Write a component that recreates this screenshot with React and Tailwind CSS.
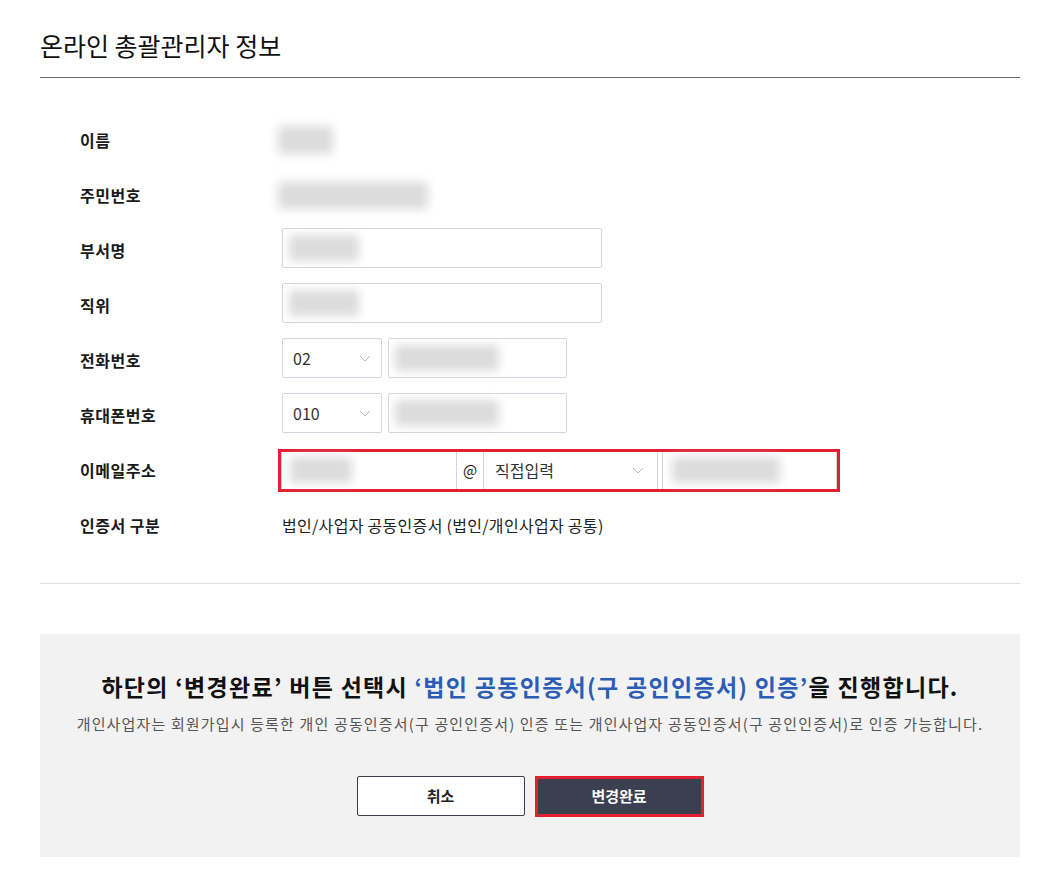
import { useState } from "react";

const font = { fontFamily: '"Noto Sans CJK KR", "Noto Sans", sans-serif' };

// masked personal data placeholder
function Masked({ className }) {
  return <div className={`rounded-[2px] bg-[#dcdcdc] blur-[5px] ${className}`} />;
}

function Chevron() {
  return (
    <svg width="12" height="7" viewBox="0 0 12 7" fill="none" className="shrink-0">
      <polyline points="1,1 6,6 11,1" stroke="#b9b7c4" strokeWidth="1" />
    </svg>
  );
}

function Row({ label, children }) {
  return (
    <div className="flex h-[40px] items-center">
      <div className="w-[198px] shrink-0 text-[16px] font-bold tracking-[0.5px] text-[#1a1a1a]">{label}</div>
      {children}
    </div>
  );
}

function TextBox({ width, blob = "w-[70px]" }) {
  return (
    <div className={`ml-[4px] -mt-[4px] flex h-[40px] items-center rounded-[2px] border border-[#d6d4e0] bg-white px-[6px] ${width}`}>
      <Masked className={`h-[26px] ${blob}`} />
    </div>
  );
}

function SelectBox({ value }) {
  return (
    <div className="ml-[4px] -mt-[4px] flex h-[40px] w-[100px] items-center justify-between rounded-[2px] border border-[#d6d4e0] bg-white pl-[10px] pr-[10px] text-[16px] text-[#333]">
      <span>{value}</span>
      <Chevron />
    </div>
  );
}

export default function App() {
  const [saved, setSaved] = useState(false);

  return (
    <div className="min-h-screen bg-white" style={font}>
      <div className="ml-[40px] w-[980px]">
        <div className="border-b border-[#666] pb-[14px] pt-[28px]">
          <h1 className="text-[25px] leading-[35px] text-[#111]">온라인 총괄관리자 정보</h1>
        </div>

        <div className="flex flex-col gap-[15px] border-b border-[#dedede] pb-[38px] pl-[40px] pt-[42px]">
          <Row label="이름">
            <Masked className="h-[28px] w-[55px]" />
          </Row>
          <Row label="주민번호">
            <Masked className="h-[27px] w-[150px]" />
          </Row>
          <Row label="부서명">
            <TextBox width="w-[320px]" />
          </Row>
          <Row label="직위">
            <TextBox width="w-[320px]" />
          </Row>
          <Row label="전화번호">
            <SelectBox value="02" />
            <div className="ml-[2px] flex">
              <TextBox width="w-[179px]" blob="w-[104px]" />
            </div>
          </Row>
          <Row label="휴대폰번호">
            <SelectBox value="010" />
            <div className="ml-[2px] flex">
              <TextBox width="w-[179px]" blob="w-[104px]" />
            </div>
          </Row>
          <Row label="이메일주소">
            <div className="flex h-[43px] w-[562px] shrink-0 border-[3px] border-[#e31f31] bg-white">
              <div className="flex h-full w-[176px] items-center border-x border-[#d6d4e0] pl-[8px]">
                <Masked className="h-[26px] w-[62px]" />
              </div>
              <div className="flex h-full w-[27px] items-center justify-center border-r border-[#d6d4e0] text-[15px] text-[#222]">
                @
              </div>
              <div className="flex h-full w-[174px] items-center justify-between border-r border-[#d6d4e0] pl-[11px] pr-[13px] text-[16px] text-[#333]">
                <span>직접입력</span>
                <Chevron />
              </div>
              <div className="ml-[4px] flex h-full w-[175px] items-center border-x border-[#d6d4e0] pl-[9px]">
                <Masked className="h-[26px] w-[108px]" />
              </div>
            </div>
          </Row>
          <Row label="인증서 구분">
            <span className="ml-[4px] text-[16px] tracking-[0.3px] text-[#222]">
              법인/사업자 공동인증서 (법인/개인사업자 공통)
            </span>
          </Row>
        </div>

        <div className="mt-[50px] flex flex-col items-center bg-[#f2f2f2] pb-[40px] pt-[36px]">
          <p className="whitespace-nowrap text-[23px] font-bold leading-[32px] tracking-[1.3px] text-[#111]">
            하단의 ‘변경완료’ 버튼 선택시{" "}
            <span className="text-[#2c5db6]">‘법인 공동인증서(구 공인인증서) 인증’</span>을 진행합니다.
          </p>
          <p className="mt-[12px] whitespace-nowrap text-[15px] leading-[20px] tracking-[1.15px] text-[#555]">
            개인사업자는 회원가입시 등록한 개인 공동인증서(구 공인인증서) 인증 또는 개인사업자 공동인증서(구 공인인증서)로 인증 가능합니다.
          </p>
          <div className="mt-[42px] flex gap-[10px]">
            <button className="h-[40px] w-[168px] rounded-[2px] border border-[#3b4050] bg-white text-[15px] font-bold text-[#222]">
              취소
            </button>
            <button
              onClick={() => setSaved(!saved)}
              className="h-[41px] w-[169px] border-[3px] border-[#e31f31] bg-[#3b4050] text-[15px] font-bold text-white"
            >
              변경완료
            </button>
          </div>
        </div>
      </div>
    </div>
  );
}
